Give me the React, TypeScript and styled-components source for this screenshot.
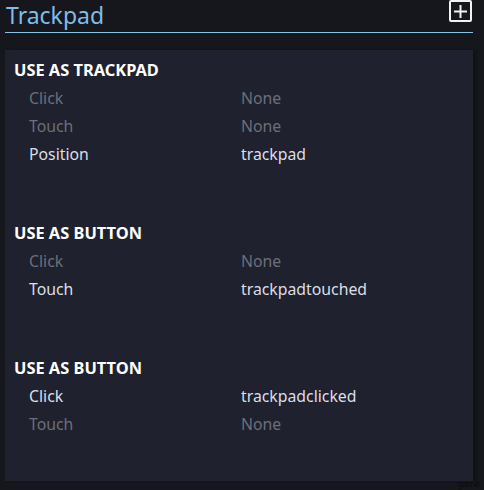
import React from 'react';
import styled, { createGlobalStyle } from 'styled-components';

const GlobalStyle = createGlobalStyle`
  html, body {
    margin: 0;
    padding: 0;
    background: #16171d;
  }
  body {
    font-family: "Noto Sans", "Open Sans", sans-serif;
  }
`;

const Page = styled.div`
  width: 484px;
  height: 490px;
  position: relative;
  background: #16171d;
  overflow: hidden;
`;

const Header = styled.div`
  display: flex;
  align-items: flex-start;
  justify-content: space-between;
  margin: 0 11px 0 5px;
  height: 32px;
  border-bottom: 1px solid #86c1e6;
`;

const Title = styled.h1`
  margin: 0;
  padding: 0 0 0 1px;
  font-size: 23px;
  font-weight: 400;
  line-height: 30px;
  color: #7fbde6;
  white-space: nowrap;
`;

const AddButton = styled.button`
  margin: 0 1px 0 0;
  padding: 0;
  width: 23px;
  height: 22px;
  border: 2px solid #f2f2f2;
  border-radius: 2px;
  background: transparent;
  display: flex;
  align-items: center;
  justify-content: center;
  cursor: pointer;
`;

const Panel = styled.div`
  margin: 17px 11px 0 5px;
  padding: 6px 0 0;
  height: 431px;
  box-sizing: border-box;
  background: #1f212e;
  box-shadow: 3px 0 3px rgba(0, 0, 0, 0.25);
  display: flex;
  flex-direction: column;
  gap: 7px;
`;

const Section = styled.section`
  padding-bottom: 44px;
`;

const Heading = styled.h2`
  margin: 0;
  padding-left: 9px;
  height: 28px;
  line-height: 27px;
  font-size: 16.4px;
  font-weight: 700;
  color: #ffffff;
  white-space: nowrap;
`;

const Row = styled.div<{ $active?: boolean }>`
  display: grid;
  grid-template-columns: 212px 1fr;
  padding-left: 24px;
  height: 28px;
  line-height: 29px;
  font-size: 15.8px;
  color: ${(p) => (p.$active ? '#dcdee6' : '#6c6f7a')};
`;

const Watermark = styled.span`
  position: absolute;
  right: 4px;
  bottom: 1px;
  font-size: 9px;
  line-height: 9px;
  color: #0a0a0c;
  font-family: "Liberation Sans", sans-serif;
`;

type Binding = { label: string; value: string; active?: boolean };

const sections: { title: string; rows: Binding[] }[] = [
  {
    title: 'USE AS TRACKPAD',
    rows: [
      { label: 'Click', value: 'None' },
      { label: 'Touch', value: 'None' },
      { label: 'Position', value: 'trackpad', active: true },
    ],
  },
  {
    title: 'USE AS BUTTON',
    rows: [
      { label: 'Click', value: 'None' },
      { label: 'Touch', value: 'trackpadtouched', active: true },
    ],
  },
  {
    title: 'USE AS BUTTON',
    rows: [
      { label: 'Click', value: 'trackpadclicked', active: true },
      { label: 'Touch', value: 'None' },
    ],
  },
];

const PlusIcon = () => (
  <svg width="15" height="15" viewBox="0 0 15 15">
    <path d="M7.5 1 V14 M1 7.5 H14" stroke="#f2f2f2" strokeWidth="2" />
  </svg>
);

const App: React.FC = () => {
  return (
    <Page>
      <GlobalStyle />
      <Header>
        <Title>Trackpad</Title>
        <AddButton type="button" aria-label="Add">
          <PlusIcon />
        </AddButton>
      </Header>
      <Panel>
        {sections.map((s, i) => (
          <Section key={i}>
            <Heading>{s.title}</Heading>
            {s.rows.map((r) => (
              <Row key={r.label} $active={r.active}>
                <span>{r.label}</span>
                <span>{r.value}</span>
              </Row>
            ))}
          </Section>
        ))}
      </Panel>
      <Watermark>game</Watermark>
    </Page>
  );
};

export default App;
